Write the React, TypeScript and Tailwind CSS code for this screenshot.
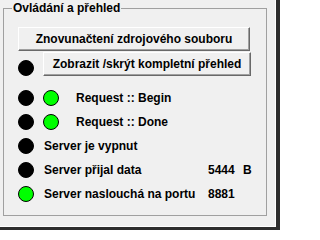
import React from "react";

const font = { fontFamily: '"Liberation Sans", Arial, sans-serif' };

function Dot({ on }: { on?: boolean }) {
  return (
    <span
      className={
        "block w-[16px] h-[16px] rounded-full shrink-0 border border-black " +
        (on ? "bg-[#00ff00]" : "bg-black")
      }
    />
  );
}

function Btn({ label, className }: { label: string; className: string }) {
  return (
    <button
      className={
        "h-[24px] flex items-center justify-center bg-[#f0f0f0] border border-t-white border-l-white border-r-[#696969] border-b-[#696969] shadow-[inset_-1px_-1px_#a0a0a0] text-[12px] font-bold text-black leading-none " +
        className
      }
    >
      {label}
    </button>
  );
}

export default function App() {
  return (
    <div className="w-[280px] h-[230px] bg-[#2e2e2e] overflow-hidden" style={font}>
      <div className="w-[276px] h-[227px] bg-[#f0f0f0] border-r border-b border-white pt-[8px] pl-[3px]">
        <div className="relative w-[264px] h-[208px] border border-[#a0a0a0] pl-[14px] pt-[18px]">
          <span className="absolute -top-[8px] left-[8px] px-[1px] bg-[#f0f0f0] text-[12px] font-bold text-black leading-[14px]">
            Ovládání a přehled
          </span>

          <Btn label="Znovunačtení zdrojového souboru" className="w-[232px]" />

          <div className="flex items-end mt-[1px]">
            <Dot />
            <Btn label="Zobrazit /skrýt kompletní přehled" className="w-[208px] ml-[9px]" />
          </div>

          <div className="flex flex-col mt-[10px] text-[12px] font-bold text-black">
            <div className="h-[24px] flex items-center">
              <Dot />
              <span className="ml-[9px]"><Dot on /></span>
              <span className="ml-[17px]">Request :: Begin</span>
            </div>
            <div className="h-[24px] flex items-center">
              <Dot />
              <span className="ml-[9px]"><Dot on /></span>
              <span className="ml-[17px]">Request :: Done</span>
            </div>
            <div className="h-[24px] flex items-center">
              <Dot />
              <span className="ml-[10px]">Server je vypnut</span>
            </div>
            <div className="h-[24px] flex items-center">
              <Dot />
              <span className="ml-[10px] w-[164px]">Server přijal data</span>
              <span className="w-[35px]">5444</span>
              <span>B</span>
            </div>
            <div className="h-[24px] flex items-center">
              <Dot on />
              <span className="ml-[10px] w-[164px]">Server naslouchá na portu</span>
              <span>8881</span>
            </div>
          </div>
        </div>
      </div>
    </div>
  );
}
